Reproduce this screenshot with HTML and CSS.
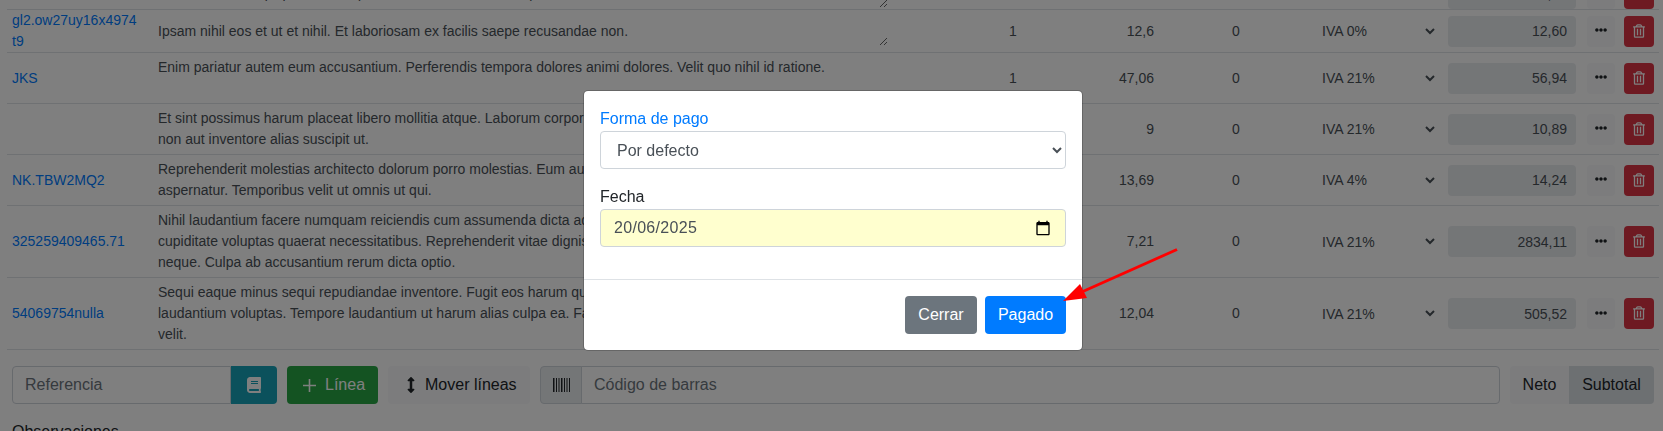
FILE: index.html
```html
<!DOCTYPE html>
<html lang="es">
<head>
<meta charset="utf-8">
<title>Factura</title>
<link rel="stylesheet" href="styles.css">
</head>
<body>
<main class="page">
  <table class="lines">
    <colgroup>
      <col class="c-ref"><col class="c-desc"><col class="c-qty"><col class="c-price"><col class="c-dto"><col class="c-iva"><col class="c-total"><col class="c-act">
    </colgroup>
    <tbody>
      <tr>
        <td class="ref"></td>
        <td><textarea class="desc r1" readonly>Natus et eum in qui porro enim quod et in eum nam a illo et placeat aut.</textarea></td>
        <td class="qty">1</td><td class="price">8</td><td class="qty">0</td>
        <td><select class="iva"><option>IVA 21%</option></select></td>
        <td class="tot"><input class="total" readonly value="9,86"></td>
        <td><div class="acts"><button class="btn-dots"><svg class="i-dots" viewBox="0 0 512 512"><path d="M328 256c0 39.8-32.2 72-72 72s-72-32.2-72-72 32.2-72 72-72 72 32.2 72 72zm104-72c-39.8 0-72 32.2-72 72s32.2 72 72 72 72-32.2 72-72-32.2-72-72-72zm-352 0c-39.8 0-72 32.2-72 72s32.2 72 72 72 72-32.2 72-72-32.2-72-72-72z"/></svg></button><button class="btn-del"><svg class="i-trash" viewBox="0 0 448 512"><path d="M268 416h24a12 12 0 0 0 12-12V188a12 12 0 0 0-12-12h-24a12 12 0 0 0-12 12v216a12 12 0 0 0 12 12zM432 80h-82.41l-34-56.7A48 48 0 0 0 274.41 0H173.59a48 48 0 0 0-41.16 23.3L98.41 80H16A16 16 0 0 0 0 96v16a16 16 0 0 0 16 16h16v336a48 48 0 0 0 48 48h288a48 48 0 0 0 48-48V128h16a16 16 0 0 0 16-16V96a16 16 0 0 0-16-16zM171.84 50.91A6 6 0 0 1 177 48h94a6 6 0 0 1 5.15 2.91L293.61 80H154.39zM368 464H80V128h288zm-212-48h24a12 12 0 0 0 12-12V188a12 12 0 0 0-12-12h-24a12 12 0 0 0-12 12v216a12 12 0 0 0 12 12z"/></svg></button></div></td>
      </tr>
      <tr>
        <td class="ref"><a href="#">gl2.ow27uy16x4974<br>t9</a></td>
        <td><textarea class="desc r1" readonly>Ipsam nihil eos et ut et nihil. Et laboriosam ex facilis saepe recusandae non.</textarea></td>
        <td class="qty">1</td><td class="price">12,6</td><td class="qty">0</td>
        <td><select class="iva"><option>IVA 0%</option></select></td>
        <td class="tot"><input class="total" readonly value="12,60"></td>
        <td><div class="acts"><button class="btn-dots"><svg class="i-dots" viewBox="0 0 512 512"><path d="M328 256c0 39.8-32.2 72-72 72s-72-32.2-72-72 32.2-72 72-72 72 32.2 72 72zm104-72c-39.8 0-72 32.2-72 72s32.2 72 72 72 72-32.2 72-72-32.2-72-72-72zm-352 0c-39.8 0-72 32.2-72 72s32.2 72 72 72 72-32.2 72-72-32.2-72-72-72z"/></svg></button><button class="btn-del"><svg class="i-trash" viewBox="0 0 448 512"><path d="M268 416h24a12 12 0 0 0 12-12V188a12 12 0 0 0-12-12h-24a12 12 0 0 0-12 12v216a12 12 0 0 0 12 12zM432 80h-82.41l-34-56.7A48 48 0 0 0 274.41 0H173.59a48 48 0 0 0-41.16 23.3L98.41 80H16A16 16 0 0 0 0 96v16a16 16 0 0 0 16 16h16v336a48 48 0 0 0 48 48h288a48 48 0 0 0 48-48V128h16a16 16 0 0 0 16-16V96a16 16 0 0 0-16-16zM171.84 50.91A6 6 0 0 1 177 48h94a6 6 0 0 1 5.15 2.91L293.61 80H154.39zM368 464H80V128h288zm-212-48h24a12 12 0 0 0 12-12V188a12 12 0 0 0-12-12h-24a12 12 0 0 0-12 12v216a12 12 0 0 0 12 12z"/></svg></button></div></td>
      </tr>
      <tr>
        <td class="ref"><a href="#">JKS</a></td>
        <td><textarea class="desc r2" readonly>Enim pariatur autem eum accusantium. Perferendis tempora dolores animi dolores. Velit quo nihil id ratione.</textarea></td>
        <td class="qty">1</td><td class="price">47,06</td><td class="qty">0</td>
        <td><select class="iva"><option>IVA 21%</option></select></td>
        <td class="tot"><input class="total" readonly value="56,94"></td>
        <td><div class="acts"><button class="btn-dots"><svg class="i-dots" viewBox="0 0 512 512"><path d="M328 256c0 39.8-32.2 72-72 72s-72-32.2-72-72 32.2-72 72-72 72 32.2 72 72zm104-72c-39.8 0-72 32.2-72 72s32.2 72 72 72 72-32.2 72-72-32.2-72-72-72zm-352 0c-39.8 0-72 32.2-72 72s32.2 72 72 72 72-32.2 72-72-32.2-72-72-72z"/></svg></button><button class="btn-del"><svg class="i-trash" viewBox="0 0 448 512"><path d="M268 416h24a12 12 0 0 0 12-12V188a12 12 0 0 0-12-12h-24a12 12 0 0 0-12 12v216a12 12 0 0 0 12 12zM432 80h-82.41l-34-56.7A48 48 0 0 0 274.41 0H173.59a48 48 0 0 0-41.16 23.3L98.41 80H16A16 16 0 0 0 0 96v16a16 16 0 0 0 16 16h16v336a48 48 0 0 0 48 48h288a48 48 0 0 0 48-48V128h16a16 16 0 0 0 16-16V96a16 16 0 0 0-16-16zM171.84 50.91A6 6 0 0 1 177 48h94a6 6 0 0 1 5.15 2.91L293.61 80H154.39zM368 464H80V128h288zm-212-48h24a12 12 0 0 0 12-12V188a12 12 0 0 0-12-12h-24a12 12 0 0 0-12 12v216a12 12 0 0 0 12 12z"/></svg></button></div></td>
      </tr>
      <tr>
        <td class="ref"></td>
        <td><textarea class="desc r2" readonly>Et sint possimus harum placeat libero mollitia atque. Laborum corporis dolorem sit quod tempora
non aut inventore alias suscipit ut.</textarea></td>
        <td class="qty"></td><td class="price">9</td><td class="qty">0</td>
        <td><select class="iva"><option>IVA 21%</option></select></td>
        <td class="tot"><input class="total" readonly value="10,89"></td>
        <td><div class="acts"><button class="btn-dots"><svg class="i-dots" viewBox="0 0 512 512"><path d="M328 256c0 39.8-32.2 72-72 72s-72-32.2-72-72 32.2-72 72-72 72 32.2 72 72zm104-72c-39.8 0-72 32.2-72 72s32.2 72 72 72 72-32.2 72-72-32.2-72-72-72zm-352 0c-39.8 0-72 32.2-72 72s32.2 72 72 72 72-32.2 72-72-32.2-72-72-72z"/></svg></button><button class="btn-del"><svg class="i-trash" viewBox="0 0 448 512"><path d="M268 416h24a12 12 0 0 0 12-12V188a12 12 0 0 0-12-12h-24a12 12 0 0 0-12 12v216a12 12 0 0 0 12 12zM432 80h-82.41l-34-56.7A48 48 0 0 0 274.41 0H173.59a48 48 0 0 0-41.16 23.3L98.41 80H16A16 16 0 0 0 0 96v16a16 16 0 0 0 16 16h16v336a48 48 0 0 0 48 48h288a48 48 0 0 0 48-48V128h16a16 16 0 0 0 16-16V96a16 16 0 0 0-16-16zM171.84 50.91A6 6 0 0 1 177 48h94a6 6 0 0 1 5.15 2.91L293.61 80H154.39zM368 464H80V128h288zm-212-48h24a12 12 0 0 0 12-12V188a12 12 0 0 0-12-12h-24a12 12 0 0 0-12 12v216a12 12 0 0 0 12 12z"/></svg></button></div></td>
      </tr>
      <tr>
        <td class="ref"><a href="#">NK.TBW2MQ2</a></td>
        <td><textarea class="desc r2" readonly>Reprehenderit molestias architecto dolorum porro molestias. Eum aut nobis quia dolores voluptatem
aspernatur. Temporibus velit ut omnis ut qui.</textarea></td>
        <td class="qty"></td><td class="price">13,69</td><td class="qty">0</td>
        <td><select class="iva"><option>IVA 4%</option></select></td>
        <td class="tot"><input class="total" readonly value="14,24"></td>
        <td><div class="acts"><button class="btn-dots"><svg class="i-dots" viewBox="0 0 512 512"><path d="M328 256c0 39.8-32.2 72-72 72s-72-32.2-72-72 32.2-72 72-72 72 32.2 72 72zm104-72c-39.8 0-72 32.2-72 72s32.2 72 72 72 72-32.2 72-72-32.2-72-72-72zm-352 0c-39.8 0-72 32.2-72 72s32.2 72 72 72 72-32.2 72-72-32.2-72-72-72z"/></svg></button><button class="btn-del"><svg class="i-trash" viewBox="0 0 448 512"><path d="M268 416h24a12 12 0 0 0 12-12V188a12 12 0 0 0-12-12h-24a12 12 0 0 0-12 12v216a12 12 0 0 0 12 12zM432 80h-82.41l-34-56.7A48 48 0 0 0 274.41 0H173.59a48 48 0 0 0-41.16 23.3L98.41 80H16A16 16 0 0 0 0 96v16a16 16 0 0 0 16 16h16v336a48 48 0 0 0 48 48h288a48 48 0 0 0 48-48V128h16a16 16 0 0 0 16-16V96a16 16 0 0 0-16-16zM171.84 50.91A6 6 0 0 1 177 48h94a6 6 0 0 1 5.15 2.91L293.61 80H154.39zM368 464H80V128h288zm-212-48h24a12 12 0 0 0 12-12V188a12 12 0 0 0-12-12h-24a12 12 0 0 0-12 12v216a12 12 0 0 0 12 12z"/></svg></button></div></td>
      </tr>
      <tr>
        <td class="ref"><a href="#">325259409465.71</a></td>
        <td><textarea class="desc r3" readonly>Nihil laudantium facere numquam reiciendis cum assumenda dicta ad quia officiis non
cupiditate voluptas quaerat necessitatibus. Reprehenderit vitae dignissimos eum hic
neque. Culpa ab accusantium rerum dicta optio.</textarea></td>
        <td class="qty"></td><td class="price">7,21</td><td class="qty">0</td>
        <td><select class="iva"><option>IVA 21%</option></select></td>
        <td class="tot"><input class="total" readonly value="2834,11"></td>
        <td><div class="acts"><button class="btn-dots"><svg class="i-dots" viewBox="0 0 512 512"><path d="M328 256c0 39.8-32.2 72-72 72s-72-32.2-72-72 32.2-72 72-72 72 32.2 72 72zm104-72c-39.8 0-72 32.2-72 72s32.2 72 72 72 72-32.2 72-72-32.2-72-72-72zm-352 0c-39.8 0-72 32.2-72 72s32.2 72 72 72 72-32.2 72-72-32.2-72-72-72z"/></svg></button><button class="btn-del"><svg class="i-trash" viewBox="0 0 448 512"><path d="M268 416h24a12 12 0 0 0 12-12V188a12 12 0 0 0-12-12h-24a12 12 0 0 0-12 12v216a12 12 0 0 0 12 12zM432 80h-82.41l-34-56.7A48 48 0 0 0 274.41 0H173.59a48 48 0 0 0-41.16 23.3L98.41 80H16A16 16 0 0 0 0 96v16a16 16 0 0 0 16 16h16v336a48 48 0 0 0 48 48h288a48 48 0 0 0 48-48V128h16a16 16 0 0 0 16-16V96a16 16 0 0 0-16-16zM171.84 50.91A6 6 0 0 1 177 48h94a6 6 0 0 1 5.15 2.91L293.61 80H154.39zM368 464H80V128h288zm-212-48h24a12 12 0 0 0 12-12V188a12 12 0 0 0-12-12h-24a12 12 0 0 0-12 12v216a12 12 0 0 0 12 12z"/></svg></button></div></td>
      </tr>
      <tr>
        <td class="ref"><a href="#">54069754nulla</a></td>
        <td><textarea class="desc r3" readonly>Sequi eaque minus sequi repudiandae inventore. Fugit eos harum quia rerum nesciunt
laudantium voluptas. Tempore laudantium ut harum alias culpa ea. Facere autem
velit.</textarea></td>
        <td class="qty"></td><td class="price">12,04</td><td class="qty">0</td>
        <td><select class="iva"><option>IVA 21%</option></select></td>
        <td class="tot"><input class="total" readonly value="505,52"></td>
        <td><div class="acts"><button class="btn-dots"><svg class="i-dots" viewBox="0 0 512 512"><path d="M328 256c0 39.8-32.2 72-72 72s-72-32.2-72-72 32.2-72 72-72 72 32.2 72 72zm104-72c-39.8 0-72 32.2-72 72s32.2 72 72 72 72-32.2 72-72-32.2-72-72-72zm-352 0c-39.8 0-72 32.2-72 72s32.2 72 72 72 72-32.2 72-72-32.2-72-72-72z"/></svg></button><button class="btn-del"><svg class="i-trash" viewBox="0 0 448 512"><path d="M268 416h24a12 12 0 0 0 12-12V188a12 12 0 0 0-12-12h-24a12 12 0 0 0-12 12v216a12 12 0 0 0 12 12zM432 80h-82.41l-34-56.7A48 48 0 0 0 274.41 0H173.59a48 48 0 0 0-41.16 23.3L98.41 80H16A16 16 0 0 0 0 96v16a16 16 0 0 0 16 16h16v336a48 48 0 0 0 48 48h288a48 48 0 0 0 48-48V128h16a16 16 0 0 0 16-16V96a16 16 0 0 0-16-16zM171.84 50.91A6 6 0 0 1 177 48h94a6 6 0 0 1 5.15 2.91L293.61 80H154.39zM368 464H80V128h288zm-212-48h24a12 12 0 0 0 12-12V188a12 12 0 0 0-12-12h-24a12 12 0 0 0-12 12v216a12 12 0 0 0 12 12z"/></svg></button></div></td>
      </tr>
    </tbody>
  </table>

  <div class="toolbar">
    <div class="group g-ref">
      <input class="field" placeholder="Referencia">
      <button class="btn-info"><svg class="i-book" viewBox="0 0 448 512"><path d="M448 360V24c0-13.3-10.7-24-24-24H96C43 0 0 43 0 96v320c0 53 43 96 96 96h328c13.3 0 24-10.7 24-24v-16c0-7.5-3.5-14.3-8.9-18.7-4.2-15.4-4.2-59.3 0-74.7 5.4-4.3 8.9-11.1 8.9-18.6zM128 134c0-3.3 2.7-6 6-6h212c3.3 0 6 2.7 6 6v20c0 3.3-2.7 6-6 6H134c-3.3 0-6-2.7-6-6v-20zm0 64c0-3.3 2.7-6 6-6h212c3.3 0 6 2.7 6 6v20c0 3.3-2.7 6-6 6H134c-3.3 0-6-2.7-6-6v-20zm253.4 250H96c-17.7 0-32-14.3-32-32 0-17.6 14.4-32 32-32h285.4c-1.9 17.1-1.9 46.9 0 64z"/></svg></button>
    </div>
    <button class="btn btn-success"><svg class="i-plus" viewBox="0 0 13 13"><path d="M5.7 0h1.6v5.7H13v1.6H7.3V13H5.7V7.3H0V5.7h5.7z"/></svg>Línea</button>
    <button class="btn btn-light"><svg class="i-move" viewBox="0 0 256 512"><path d="M214.059 377.941H168V134.059h46.059c21.382 0 32.09-25.851 16.971-40.971L144.971 7.029c-9.373-9.373-24.568-9.373-33.941 0L24.971 93.088c-15.119 15.119-4.411 40.971 16.971 40.971H88v243.882H41.941c-21.382 0-32.09 25.851-16.971 40.971l86.059 86.059c9.373 9.373 24.568 9.373 33.941 0l86.059-86.059c15.12-15.119 4.412-40.971-16.97-40.971z"/></svg>Mover líneas</button>
    <div class="group g-code">
      <span class="addon"><svg class="i-code" viewBox="0 0 17 14"><path d="M0 0h1.5v14H0zM3 0h1v14H3zM5.500 0h1v14h-1zM8 0h1.500v14H8zM11 0h1v14h-1zM13.500 0h1v14h-1zM16 0h1v14h-1z"/></svg></span>
      <input class="field field-code" placeholder="Código de barras">
    </div>
    <div class="toggle">
      <button class="tg">Neto</button>
      <button class="tg tg-on">Subtotal</button>
    </div>
  </div>

  <label class="obs">Observaciones</label>
</main>

<div class="backdrop"></div>

<section class="modal">
  <div class="modal-body">
    <div class="form-group">
      <label class="lbl lbl-blue">Forma de pago</label>
      <select class="ctl"><option>Por defecto</option></select>
    </div>
    <div class="form-group">
      <label class="lbl">Fecha</label>
      <div class="ctl ctl-date">
        <input class="date-text" value="20/06/2025">
        <svg class="i-cal" viewBox="0 0 24 24"><path d="M20 3h-1V1h-2v2H7V1H5v2H4c-1.100 0-2 .9-2 2v16c0 1.100.9 2 2 2h16c1.100 0 2-.9 2-2V5c0-1.100-.9-2-2-2zm0 18H4V8h16v13z"/></svg>
      </div>
    </div>
  </div>
  <div class="modal-footer">
    <button class="btn-close">Cerrar</button>
    <button class="btn-pay">Pagado</button>
  </div>
</section>

<svg class="arrow" viewBox="0 0 1663 431">
  <line x1="1177" y1="249.5" x2="1075" y2="295" stroke="#ff0000" stroke-width="3"/>
  <polygon points="1063,301 1080,284 1087,298" fill="#ff0000"/>
</svg>
</body>
</html>
```
FILE: styles.css
```css
* { box-sizing: border-box; }
html, body { margin: 0; height: 431px; overflow: hidden; background: #fff; }
body { font-family: "Liberation Sans", Arial, sans-serif; font-size: 16px; line-height: 24px; color: #212529; }

.page { padding: 0 4px 0 7px; margin-top: -22px; }

.lines { width: 1652px; table-layout: fixed; border-collapse: separate; border-spacing: 0; font-size: 14px; line-height: 21px; color: #495057; }
.c-ref { width: 146px; } .c-desc { width: 788px; } .c-qty { width: 144px; } .c-price { width: 80px; }
.c-dto { width: 142px; } .c-iva { width: 135px; } .c-total { width: 140px; } .c-act { width: 77px; }
.lines td { padding: 0; border-bottom: 1px solid #dee2e6; vertical-align: middle; }
.lines .ref { padding-left: 5px; }
.ref a { color: #007bff; text-decoration: none; }
.desc { display: block; width: 730px; margin-left: 5px; padding: 4px 0; border: 0; outline: 0; background: transparent; font: inherit; color: #495057; overflow: hidden; white-space: pre-wrap; }
.r1 { height: 29px; } .r2 { height: 50px; } .r3 { height: 71px; }
.lines .qty { text-align: center; }
.lines .price { text-align: right; padding-right: 11px; }
.iva { display: block; width: 120px; height: 31px; margin-left: 11px; padding: 0; border: 0; outline: 0; background: transparent; font: 14px "Liberation Sans", Arial, sans-serif; color: #495057; }
.lines .tot { padding: 0 6px; }
.total { display: block; width: 128px; height: 31px; padding: 0 9px; border: 0; border-radius: 4px; background: #e9ecef; font: 14px "Liberation Sans", Arial, sans-serif; color: #495057; text-align: right; }
.acts { display: flex; gap: 9px; padding-left: 5px; }
.btn-dots, .btn-del { display: flex; align-items: center; justify-content: center; height: 31px; padding: 0; border: 0; border-radius: 4px; }
.btn-dots { width: 28px; background: #f8f9fa; padding-bottom: 2px; }
.btn-del { width: 30px; background: #dc3545; padding-bottom: 1px; }
.i-dots { width: 12px; height: 12px; fill: #212529; }
.i-trash { width: 12px; height: 14px; fill: #fff; }

.toolbar { display: flex; gap: 10px; height: 38px; margin: 16px 5px 0 5px; }
.group { display: flex; height: 38px; }
.g-ref { width: 265px; flex: none; }
.g-code { width: 960px; flex: none; }
.field { flex: 1; min-width: 0; height: 38px; padding: 0 12px; border: 1px solid #ced4da; background: #fff; font: 16px "Liberation Sans", Arial, sans-serif; color: #495057; }
.field::placeholder { color: #6c757d; opacity: 1; }
.g-ref .field { border-radius: 4px 0 0 4px; }
.btn-info { width: 46px; height: 38px; display: flex; align-items: center; justify-content: center; padding: 0; border: 0; border-radius: 0 4px 4px 0; background: #17a2b8; }
.i-book { width: 14px; height: 16px; fill: #fff; }
.btn { display: flex; align-items: center; flex: none; height: 38px; padding: 0; border: 0; border-radius: 4px; font: 16px "Liberation Sans", Arial, sans-serif; white-space: nowrap; }
.btn-success { width: 91px; padding-left: 16px; background: #28a745; color: #fff; }
.btn-light { width: 142px; padding-left: 19px; background: #f8f9fa; color: #212529; }
.i-plus { width: 13px; height: 13px; margin-right: 9px; fill: #fff; }
.i-move { width: 8px; height: 16px; margin-right: 10px; fill: #212529; }
.addon { flex: none; width: 42px; height: 38px; display: flex; align-items: center; justify-content: center; background: #e9ecef; border: 1px solid #ced4da; border-radius: 4px 0 0 4px; }
.i-code { width: 17px; height: 14px; fill: #212529; }
.field-code { margin-left: -1px; border-radius: 0 4px 4px 0; }
.toggle { display: flex; flex: none; width: 144px; height: 38px; }
.tg { height: 38px; padding: 0; border: 0; background: #f8f9fa; color: #212529; font: 16px "Liberation Sans", Arial, sans-serif; border-radius: 4px 0 0 4px; }
.tg:first-child { width: 59px; }
.tg-on { width: 85px; background: #dae0e5; border-radius: 0 4px 4px 0; }
.obs { display: block; margin: 16px 0 0 5px; }

.backdrop { position: fixed; inset: 0; background: rgba(0, 0, 0, .5); }
.modal { position: fixed; left: 583px; top: 90px; width: 500px; background: #fff; border: 1px solid rgba(0, 0, 0, .2); border-radius: 5px; background-clip: padding-box; }
.modal-body { padding: 16px; }
.form-group { margin-bottom: 16px; }
.lbl { display: block; }
.lbl-blue { color: #007bff; }
.ctl { display: block; width: 100%; height: 38px; padding: 6px 12px; border: 1px solid #ced4da; border-radius: 4px; background: #fff; font: 16px "Liberation Sans", Arial, sans-serif; color: #495057; }
.ctl-date { display: flex; align-items: center; padding: 0 14px 0 12px; background: #ffffcf; }
.date-text { flex: 1; min-width: 0; padding: 0 0 0 1px; border: 0; outline: 0; background: transparent; font: inherit; color: inherit; letter-spacing: .3px; }
.i-cal { flex: none; width: 16px; height: 16px; fill: #000; }
.modal-footer { display: flex; justify-content: flex-end; gap: 8px; padding: 16px; border-top: 1px solid #dee2e6; }
.btn-close, .btn-pay { height: 38px; padding: 0 12px; border: 0; border-radius: 4px; color: #fff; font: 16px "Liberation Sans", Arial, sans-serif; }
.btn-close { width: 72px; background: #6c757d; }
.btn-pay { width: 81px; background: #007bff; }

.arrow { position: fixed; left: 0; top: 0; width: 1663px; height: 431px; pointer-events: none; }
```
